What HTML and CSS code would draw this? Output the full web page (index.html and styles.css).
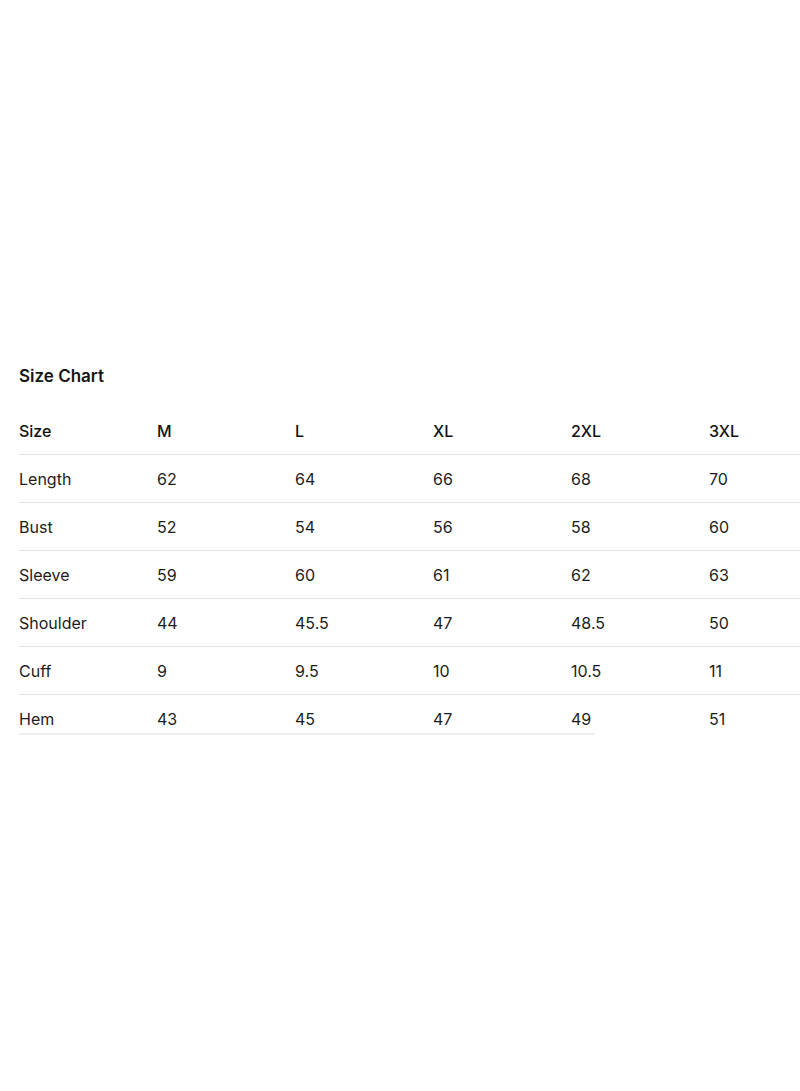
FILE: index.html
```html
<!DOCTYPE html>
<html>
<head>
<meta charset="utf-8">
<link rel="stylesheet" href="styles.css">
</head>
<body>
<div class="page">
  <h2 class="title">Size Chart</h2>
  <div class="scroller">
    <div class="table">
      <div class="row head"><span>Size</span><span>M</span><span>L</span><span>XL</span><span>2XL</span><span>3XL</span></div>
      <div class="row"><span>Length</span><span>62</span><span>64</span><span>66</span><span>68</span><span>70</span></div>
      <div class="row"><span>Bust</span><span>52</span><span>54</span><span>56</span><span>58</span><span>60</span></div>
      <div class="row"><span>Sleeve</span><span>59</span><span>60</span><span>61</span><span>62</span><span>63</span></div>
      <div class="row"><span>Shoulder</span><span>44</span><span>45.5</span><span>47</span><span>48.5</span><span>50</span></div>
      <div class="row"><span>Cuff</span><span>9</span><span>9.5</span><span>10</span><span>10.5</span><span>11</span></div>
      <div class="row last"><span>Hem</span><span>43</span><span>45</span><span>47</span><span>49</span><span>51</span></div>
    </div>
    <div class="thumb"></div>
  </div>
</div>
</body>
</html>
```
FILE: styles.css
```css
html, body {
  margin: 0;
  padding: 0;
  background: #ffffff;
}
body {
  font-family: Inter, "Liberation Sans", sans-serif;
  color: #1c1c1c;
  width: 800px;
  overflow: hidden;
}
.page {
  padding: 364px 0 0 19px;
}
.title {
  margin: 0;
  font-size: 17px;
  font-weight: 600;
  line-height: 24px;
  color: #161616;
}
.scroller {
  margin-top: 19px;
  width: 781px;
  overflow: hidden;
}
.table {
  width: 900px;
}
.row {
  display: grid;
  grid-template-columns: repeat(6, 138px);
  font-size: 16px;
  line-height: 24px;
  padding: 12px 0 11px;
  border-bottom: 1px solid #e3e3e3;
}
.row.head {
  font-weight: 500;
  color: #111;
}
.row.last {
  border-bottom: none;
  padding-bottom: 2px;
}
.thumb {
  width: 576px;
  height: 2px;
  background: #efefef;
}
```
